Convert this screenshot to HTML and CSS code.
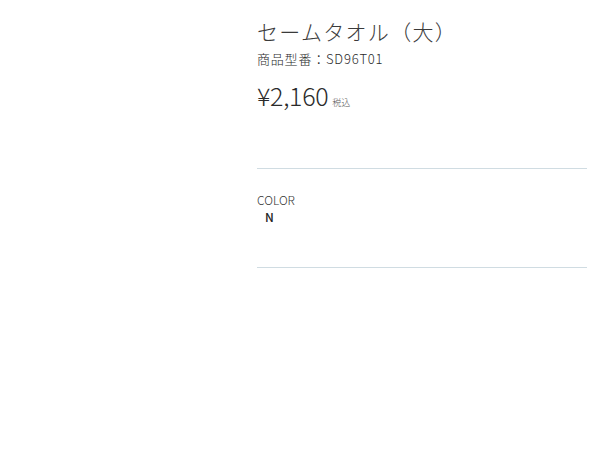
FILE: index.html
```html
<!DOCTYPE html>
<html lang="ja">
<head>
<meta charset="utf-8">
<link rel="stylesheet" href="styles.css">
</head>
<body>
<div class="product">
  <h1 class="title">セームタオル（大）</h1>
  <p class="model">商品型番：SD96T01</p>
  <p class="price"><span class="amount">¥2,160</span><span class="tax">税込</span></p>
  <div class="options">
    <div class="label">COLOR</div>
    <div class="value">N</div>
  </div>
</div>
</body>
</html>
```
FILE: styles.css
```css
html, body { margin: 0; padding: 0; background: #fff; }
body {
  font-family: "Noto Sans CJK JP", "Noto Sans", sans-serif;
  color: #333;
}
.product {
  margin-left: 257px;
  width: 330px;
  padding-top: 16px;
}
.title {
  margin: 0;
  font-size: 21px;
  font-weight: 300;
  line-height: 30px;
  letter-spacing: 1.3px;
  color: #3a3a3a;
}
.model {
  margin: 4px 0 0;
  font-size: 13px;
  font-weight: 300;
  line-height: 18px;
  letter-spacing: 0.8px;
  color: #2a2a2a;
}
.price {
  margin: 12px 0 0;
  line-height: 30px;
  display: flex;
  align-items: baseline;
}
.amount {
  font-family: "Noto Sans CJK JP", sans-serif;
  font-size: 25px;
  font-weight: 300;
  letter-spacing: -0.3px;
  color: #2a2a2a;
}
.tax {
  font-size: 9px;
  font-weight: 300;
  margin-left: 4px;
  color: #555;
}
.options {
  margin-top: 50px;
  border-top: 1px solid #d0dce2;
  border-bottom: 1px solid #d0dce2;
  padding: 23px 0 41px;
}
.label {
  font-family: "Noto Sans CJK JP", sans-serif;
  font-size: 12px;
  font-weight: 300;
  line-height: 16px;
  color: #333;
}
.value {
  font-family: "Noto Sans CJK JP", sans-serif;
  font-size: 12px;
  font-weight: 500;
  line-height: 18px;
  padding-left: 8px;
  color: #222;
}
```
